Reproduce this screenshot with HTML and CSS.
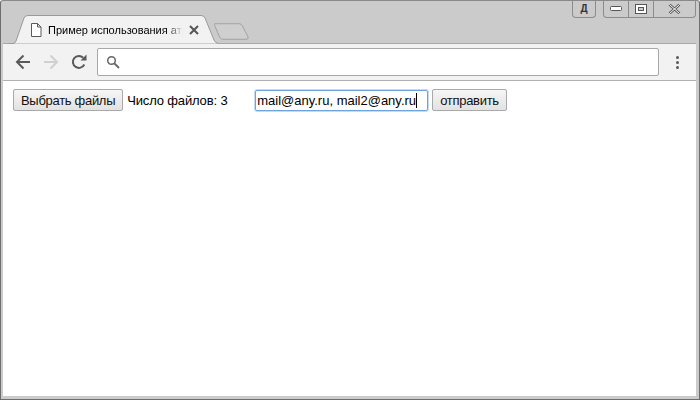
FILE: index.html
```html
<!DOCTYPE html>
<html>
<head>
    <title>Пример использования атрибута multiple</title>
    <link rel="stylesheet" href="styles.css">
</head>
<body>
    <div class="window">
        <div class="tabstrip">
            <div class="tab">
                <svg class="tab-shape" width="210" height="29" viewBox="0 0 210 29">
                    <path d="M0 28.5H4Q6 28.5 7 26L15 3Q16 .5 19 .5H192Q195 .5 196 3L205 25Q206 27.5 209 28.5" fill="#f2f2f2" stroke="#9a9a9a"/>
                </svg>
                <svg class="page-icon" width="12" height="14" viewBox="0 0 12 14">
                    <path d="M1.5 .5H7.5L11 4V13.5H1.5ZM7.5 .5V4H11" fill="#fff" stroke="#5a5a5a"/>
                </svg>
                <span class="tab-title">Пример использования атрибута multiple</span>
                <svg class="tab-close" width="10" height="10" viewBox="0 0 10 10">
                    <path d="M1 1L9 9M9 1L1 9" stroke="#555" stroke-width="2"/>
                </svg>
            </div>
            <svg class="new-tab" width="35" height="19" viewBox="0 0 36 19">
                <path d="M1 1.500H26Q28 1.500 29 3.500L35 15Q36 17.500 33 17.500H9Q7 17.500 6 15.500L.5 3Q0 1.500 1 1.500Z" fill="#cfcfcf" stroke="#a0a0a0"/>
            </svg>
            <div class="user-btn">Д</div>
            <div class="win-controls">
                <div class="win-btn win-min">
                    <svg width="12" height="6" viewBox="0 0 12 6"><rect x=".5" y=".5" width="11" height="4" rx="1" fill="#fff" stroke="#555"/></svg>
                </div>
                <div class="win-btn win-max">
                    <svg width="12" height="10" viewBox="0 0 12 10"><rect x=".5" y=".5" width="11" height="9" fill="#fff" stroke="#555"/><rect x="3.500" y="3.500" width="5" height="3" fill="#ccc" stroke="#555"/></svg>
                </div>
                <div class="win-btn win-close">
                    <svg width="13" height="10" viewBox="0 0 13 10"><path d="M1.500 .5L11.500 9.500M11.500 .5L1.500 9.500" stroke="#555" stroke-width="2.500"/><path d="M1.500 .5L11.500 9.500M11.500 .5L1.500 9.500" stroke="#fff" stroke-width="1"/></svg>
                </div>
            </div>
        </div>

        <div class="toolbar">
            <svg class="nav-icon" width="16" height="16" viewBox="0 0 16 16">
                <path d="M15 8H2.500M8.500 1.500L2 8L8.500 14.500" fill="none" stroke="#5a5a5a" stroke-width="2"/>
            </svg>
            <svg class="nav-icon" width="16" height="16" viewBox="0 0 16 16">
                <path d="M1 8H13.500M7.500 1.500L14 8L7.500 14.500" fill="none" stroke="#d0d0d0" stroke-width="2"/>
            </svg>
            <svg class="nav-icon" width="16" height="16" viewBox="0 0 16 16">
                <path d="M13.300 10.500A6 6 0 1 1 12.200 3.700" fill="none" stroke="#5a5a5a" stroke-width="2"/>
                <path d="M9.500 6.500H15.500V.5Z" fill="#5a5a5a"/>
            </svg>
            <div class="omnibox">
                <svg width="14" height="14" viewBox="0 0 14 14">
                    <circle cx="5.500" cy="5.500" r="3.800" fill="none" stroke="#666" stroke-width="1.500"/>
                    <path d="M8.500 8.500L13 13" stroke="#666" stroke-width="1.800"/>
                </svg>
            </div>
            <div class="menu-dots"><span></span><span></span><span></span></div>
        </div>

        <div class="content">
            <form class="mail-form">
                <button type="button" class="btn">Выбрать файлы</button>
                <span class="file-count">Число файлов: 3</span>
                <div class="email-input">mail@any.ru, mail2@any.ru<span class="caret"></span></div>
                <button type="button" class="btn">отправить</button>
            </form>
        </div>
    </div>
</body>
</html>
```

FILE: styles.css
```css
body {
    margin: 0;
    padding: 0;
    font-family: "Liberation Sans", Arial, sans-serif;
    overflow: hidden;
}

.window {
    width: 700px;
    height: 400px;
    box-sizing: border-box;
    display: flex;
    flex-direction: column;
    background-color: #cbcbcb;
    border: 1px solid #6e6e6e;
    border-top-color: #8a8a8a;
    border-radius: 3px 3px 0 0;
    padding: 0 3px 3px 2px;
}

/* tab row */
.tabstrip {
    height: 42px;
    flex-shrink: 0;
    display: flex;
    align-items: flex-start;
}

.tab {
    position: relative;
    width: 210px;
    height: 29px;
    margin-top: 14px;
    margin-left: 6px;
    display: flex;
    align-items: center;
    padding-left: 21px;
    box-sizing: border-box;
}

.tab-shape {
    position: absolute;
    left: 0;
    top: 0;
}

.page-icon {
    position: relative;
    flex-shrink: 0;
}

.tab-title {
    position: relative;
    width: 135px;
    margin-left: 6px;
    font-size: 11px;
    white-space: nowrap;
    overflow: hidden;
    color: #000;
    -webkit-mask-image: linear-gradient(to right, #000 88%, transparent);
    mask-image: linear-gradient(to right, #000 88%, transparent);
}

.tab-close {
    position: relative;
    margin-left: 6px;
    flex-shrink: 0;
}

.new-tab {
    margin-top: 21px;
    margin-left: -5px;
}

.user-btn {
    width: 24px;
    height: 17px;
    margin-left: auto;
    box-sizing: border-box;
    border: 1px solid #8c8c8c;
    border-top: none;
    border-radius: 0 0 4px 4px;
    font-size: 10px;
    font-weight: bold;
    line-height: 16px;
    text-align: center;
    color: #333;
}

.win-controls {
    height: 17px;
    margin-left: 7px;
    display: flex;
    box-sizing: border-box;
    border: 1px solid #8c8c8c;
    border-top: none;
    border-radius: 0 0 4px 4px;
}

.win-btn {
    display: flex;
    align-items: center;
    justify-content: center;
    border-left: 1px solid #8c8c8c;
}

.win-min {
    width: 24px;
    border-left: none;
}

.win-max {
    width: 24px;
}

.win-close {
    width: 41px;
}

/* toolbar */
.toolbar {
    height: 38px;
    flex-shrink: 0;
    display: flex;
    align-items: center;
    box-sizing: border-box;
    background-color: #f2f2f2;
    border-top: 1px solid #a8a8a8;
    border-bottom: 1px solid #b0b0b0;
    padding-left: 12px;
}

.nav-icon {
    flex-shrink: 0;
    margin-right: 12px;
}

.omnibox {
    width: 562px;
    height: 28px;
    box-sizing: border-box;
    margin-left: -2px;
    display: flex;
    align-items: center;
    padding-left: 8px;
    background-color: #fff;
    border: 1px solid #a8a8a8;
    border-radius: 2px;
}

.menu-dots {
    margin-left: 17px;
    display: flex;
    flex-direction: column;
    gap: 2px;
}

.menu-dots span {
    width: 3px;
    height: 3px;
    background-color: #5a5a5a;
    border-radius: 50%;
}

/* page */
.content {
    flex: 1;
    background-color: #fff;
    padding: 8px 10px;
}

.mail-form {
    display: flex;
    align-items: center;
    font-size: 13px;
    color: #000;
}

.btn {
    height: 22px;
    padding: 0 7px;
    font-family: inherit;
    font-size: 13px;
    letter-spacing: -0.3px;
    color: #111;
    background: linear-gradient(#f6f6f6, #e2e2e2);
    border: 1px solid #a9a9a9;
    border-radius: 2px;
}

.file-count {
    width: 128px;
    margin-left: 4px;
    letter-spacing: -0.15px;
}

.email-input {
    width: 173px;
    height: 21px;
    box-sizing: border-box;
    display: flex;
    align-items: center;
    padding-left: 1px;
    margin-right: 4px;
    white-space: nowrap;
    border: 1px solid #6fa3e0;
    border-radius: 2px;
    box-shadow: 0 0 0 1px rgba(125, 175, 230, 0.45);
}

.caret {
    width: 1px;
    height: 15px;
    background-color: #000;
}
```
